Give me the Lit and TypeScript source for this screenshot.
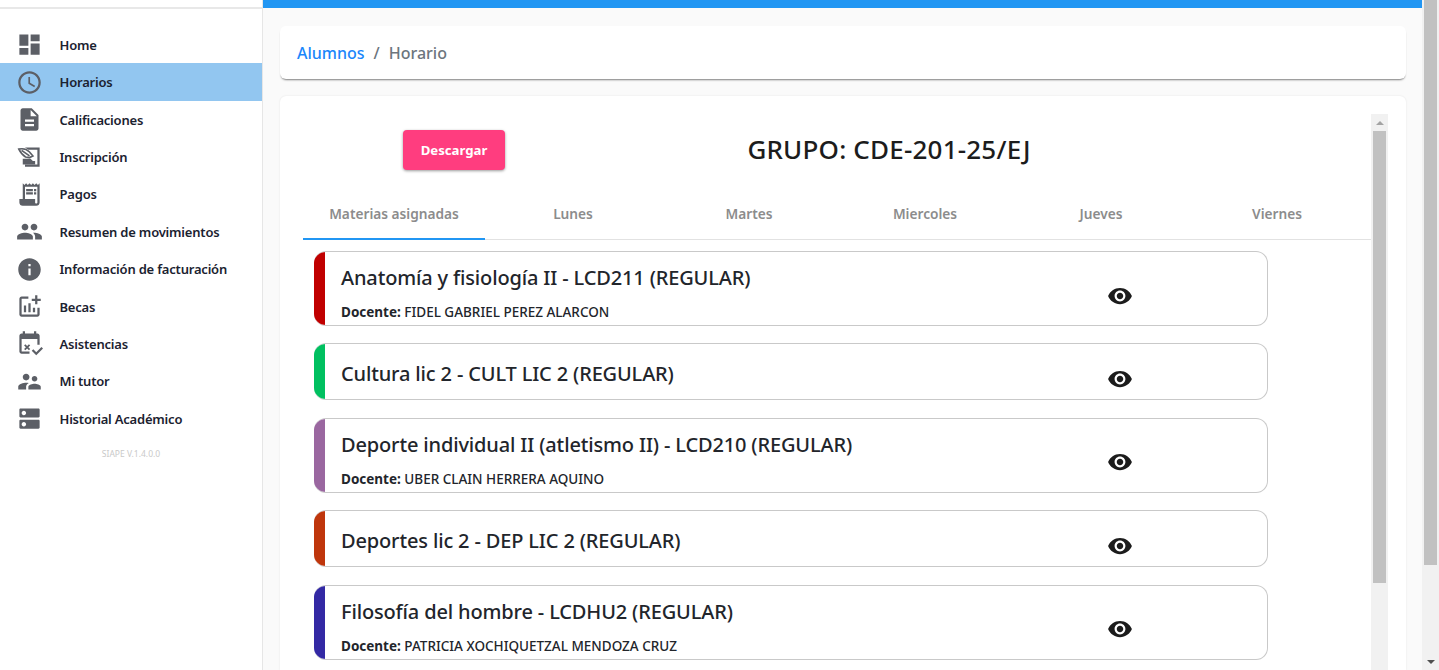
import { LitElement, html, css, svg } from 'lit';
import { customElement } from 'lit/decorators.js';

const ICONS: Record<string, unknown> = {
  dashboard: svg`<path d="M3 13h8V3H3v10zm0 8h8v-6H3v6zm10 0h8V11h-8v10zm0-18v6h8V3h-8z"/>`,
  schedule: svg`<path d="M11.99 2C6.47 2 2 6.48 2 12s4.47 10 9.99 10C17.52 22 22 17.52 22 12S17.52 2 11.99 2zM12 20c-4.42 0-8-3.58-8-8s3.58-8 8-8 8 3.58 8 8-3.58 8-8 8zm.5-13H11v6l5.25 3.15.75-1.23-4.5-2.67z"/>`,
  description: svg`<path d="M14 2H6c-1.1 0-1.99.9-1.99 2L4 20c0 1.1.89 2 1.99 2H18c1.1 0 2-.9 2-2V8l-6-6zm2 16H8v-2h8v2zm0-4H8v-2h8v2zm-3-5V3.5L18.5 9H13z"/>`,
  sign: svg`<path d="M8 4h13v17H8v-2h11V6h-8z"/><path d="M6 14h7l2 2h2v3H6z"/><path d="M2.5 5.5c4-1 7 0 9.5 2.5l3 3.5-3 1.5-3.5-.5C6 11 4 8.5 2.5 5.5zM5 6.5l7 5" fill="none" stroke="#5c5f66" stroke-width="1.5"/>`,
  receipt: svg`<path d="M19.5 3.5L18 2l-1.5 1.5L15 2l-1.5 1.5L12 2l-1.5 1.5L9 2 7.5 3.5 6 2v14H3v3c0 1.66 1.34 3 3 3h12c1.66 0 3-1.34 3-3V2l-1.5 1.5zM19 19c0 .55-.45 1-1 1s-1-.45-1-1v-3H8V5h11v14z"/><path d="M9 7h6v2H9zm7 0h2v2h-2zM9 10h6v2H9zm7 0h2v2h-2z"/>`,
  people: svg`<path d="M16 11c1.66 0 2.99-1.34 2.99-3S17.66 5 16 5c-1.66 0-3 1.34-3 3s1.34 3 3 3zm-8 0c1.66 0 2.99-1.34 2.99-3S9.66 5 8 5C6.34 5 5 6.34 5 8s1.34 3 3 3zm0 2c-2.33 0-7 1.17-7 3.5V19h14v-2.5c0-2.33-4.67-3.5-7-3.5zm8 0c-.29 0-.62.02-.97.05 1.16.84 1.97 1.97 1.97 3.45V19h6v-2.5c0-2.33-4.67-3.5-7-3.5z"/>`,
  info: svg`<path d="M12 2C6.48 2 2 6.48 2 12s4.48 10 10 10 10-4.48 10-10S17.52 2 12 2zm1 15h-2v-6h2v6zm0-8h-2V7h2v2z"/>`,
  addchart: svg`<path d="M22 5v2h-3v3h-2V7h-3V5h3V2h2v3h3zm-3 14H5V5h6V3H5c-1.1 0-2 .9-2 2v14c0 1.1.9 2 2 2h14c1.1 0 2-.9 2-2v-6h-2v6zm-4-6v4h2v-4h-2zm-4 4h2V9h-2v8zm-2 0v-6H7v6h2z"/>`,
  event: svg`<path d="M19 3h-1V1h-2v2H8V1H6v2H5c-1.1 0-2 .9-2 2v14c0 1.1.9 2 2 2h7v-2H5V8h14v5h2V5c0-1.1-.9-2-2-2z"/><path d="M7.2 16.9l1.6-1.6-1.6-1.6 1.1-1.1 1.6 1.6 1.6-1.6 1.1 1.1-1.6 1.6 1.6 1.6-1.1 1.1-1.6-1.6-1.6 1.6zM18 22.5l-4-4 1.4-1.4 2.6 2.6 4.6-4.6 1.4 1.4z"/>`,
  tutor: svg`<path d="M16.5 12c1.38 0 2.49-1.12 2.49-2.5S17.88 7 16.5 7C15.12 7 14 8.12 14 9.5s1.12 2.5 2.5 2.5zM9 11c1.66 0 2.99-1.34 2.99-3S10.66 5 9 5C7.34 5 6 6.34 6 8s1.34 3 3 3zm7.5 3c-1.83 0-5.5.92-5.5 2.75V19h11v-2.25c0-1.83-3.67-2.75-5.5-2.75zM9 13c-2.33 0-7 1.17-7 3.5V19h7v-2.25c0-.85.33-2.34 2.37-3.47C10.5 13.1 9.66 13 9 13z"/>`,
  dns: svg`<path d="M20 13H4c-.55 0-1 .45-1 1v6c0 .55.45 1 1 1h16c.55 0 1-.45 1-1v-6c0-.55-.45-1-1-1zM7 19c-1.1 0-2-.9-2-2s.9-2 2-2 2 .9 2 2-.9 2-2 2zM20 3H4c-.55 0-1 .45-1 1v6c0 .55.45 1 1 1h16c.55 0 1-.45 1-1V4c0-.55-.45-1-1-1zM7 9c-1.1 0-2-.9-2-2s.9-2 2-2 2 .9 2 2-.9 2-2 2z"/>`,
  eye: svg`<path d="M12 4.5C7 4.5 2.73 7.61 1 12c1.73 4.39 6 7.5 11 7.5s9.27-3.11 11-7.5c-1.73-4.39-6-7.5-11-7.5zM12 17c-2.76 0-5-2.24-5-5s2.24-5 5-5 5 2.24 5 5-2.24 5-5 5zm0-8c-1.66 0-3 1.34-3 3s1.34 3 3 3 3-1.34 3-3-1.34-3-3-3z"/>`,
};

const NAV = [
  ['dashboard', 'Home'],
  ['schedule', 'Horarios'],
  ['description', 'Calificaciones'],
  ['sign', 'Inscripción'],
  ['receipt', 'Pagos'],
  ['people', 'Resumen de movimientos'],
  ['info', 'Información de facturación'],
  ['addchart', 'Becas'],
  ['event', 'Asistencias'],
  ['tutor', 'Mi tutor'],
  ['dns', 'Historial Académico'],
];

const TABS = ['Materias asignadas', 'Lunes', 'Martes', 'Miercoles', 'Jueves', 'Viernes'];

const SUBJECTS = [
  { color: '#c00000', title: 'Anatomía y fisiología II - LCD211 (REGULAR)', teacher: 'FIDEL GABRIEL PEREZ ALARCON' },
  { color: '#00c060', title: 'Cultura lic 2 - CULT LIC 2 (REGULAR)', teacher: '' },
  { color: '#9a67a0', title: 'Deporte individual II (atletismo II) - LCD210 (REGULAR)', teacher: 'UBER CLAIN HERRERA AQUINO' },
  { color: '#bf360c', title: 'Deportes lic 2 - DEP LIC 2 (REGULAR)', teacher: '' },
  { color: '#3329a4', title: 'Filosofía del hombre - LCDHU2 (REGULAR)', teacher: 'PATRICIA XOCHIQUETZAL MENDOZA CRUZ' },
];

const icon = (name: string) => html`<svg viewBox="0 0 24 24" aria-hidden="true">${ICONS[name]}</svg>`;

@customElement('app-root')
export class AppRoot extends LitElement {
  static styles = css`
    :host {
      display: flex;
      height: 670px;
      overflow: hidden;
      font-family: 'Noto Sans', 'Open Sans', sans-serif;
      color: #20232a;
      background: #fafafa;
    }
    .sidebar {
      width: 262px;
      flex: none;
      background: #fff;
      border-right: 1px solid #e6e6e6;
    }
    .brand {
      height: 7px;
      border-bottom: 2px solid #e8e8e8;
      margin-bottom: 17.09px;
    }
    .nav-item {
      display: flex;
      align-items: center;
      height: 37.4px;
      padding-left: 16px;
      font-size: 13px;
      letter-spacing: -0.2px;
      font-weight: 600;
      color: #1b2230;
    }
    .nav-item.active {
      background: #92c6f0;
    }
    .nav-item svg {
      width: 27px;
      height: 27px;
      flex: none;
      margin-right: 16.5px;
      fill: #5c5f66;
    }
    .version {
      margin-top: 11px;
      text-align: center;
      font-size: 8.5px;
      color: #c9c9c9;
    }
    .main {
      flex: 1;
      min-width: 0;
      display: flex;
      flex-direction: column;
    }
    .topbar {
      height: 8px;
      flex: none;
      background: #2196f3;
    }
    .content {
      flex: 1;
      min-height: 0;
      display: flex;
      flex-direction: column;
      gap: 17px;
      padding: 18px 16px 0 17px;
    }
    .crumbs {
      height: 53px;
      flex: none;
      display: flex;
      align-items: center;
      padding-left: 17px;
      background: #fff;
      border-radius: 6px;
      box-shadow: 0 2px 2px -1px rgba(0, 0, 0, 0.5);
      font-size: 16px;
      font-weight: 500;
      color: #6c757d;
    }
    .crumbs a {
      color: #1a86fb;
      text-decoration: none;
    }
    .crumbs span {
      margin: 0 9px;
    }
    .panel {
      flex: 1;
      min-height: 0;
      display: flex;
      padding: 18px 18px 0 23px;
      background: #fff;
      border-radius: 6px 6px 0 0;
      box-shadow: 0 0 2px rgba(0, 0, 0, 0.1);
    }
    .panel-body {
      flex: 1;
      min-width: 0;
      overflow: hidden;
    }
    .head {
      display: grid;
      grid-template-columns: 302px 568px;
      align-items: center;
      padding-top: 16px;
      height: 40px;
      margin-bottom: 20px;
    }
    .download {
      justify-self: center;
      width: 102px;
      height: 40px;
      border: none;
      border-radius: 4px;
      background: #ff3d7f;
      color: #fff;
      font: 700 13.2px 'Noto Sans', sans-serif;
      box-shadow: 0 1px 3px rgba(0, 0, 0, 0.4);
    }
    h1 {
      margin: -2px 0 0;
      text-align: center;
      font-size: 26px;
      letter-spacing: 0.2px;
      font-weight: 500;
      color: #1c1c1c;
    }
    .tabs {
      display: grid;
      grid-template-columns: 182px repeat(5, 176px);
      height: 49px;
      border-bottom: 1px solid #e2e2e2;
    }
    .tab {
      display: flex;
      align-items: center;
      justify-content: center;
      padding-bottom: 1px;
      font-size: 13.7px;
      font-weight: 600;
      color: #8c8c8c;
      border-bottom: 2px solid transparent;
      margin-bottom: -1px;
    }
    .tab.active {
      border-bottom-color: #2196f3;
    }
    .subjects {
      display: flex;
      flex-direction: column;
      gap: 17.5px;
      width: 954px;
      margin: 11.1px 0 0 11px;
    }
    .subject {
      display: flex;
      border: 1px solid #c9c9c9;
      border-left: none;
      border-radius: 12px;
      overflow: hidden;
    }
    .accent {
      width: 11px;
      flex: none;
      margin: -1px 0;
    }
    .info {
      flex: 1;
      min-width: 0;
      padding: 11px 0 2.9px 16px;
    }
    .subject.solo .info {
      padding: 15px 0 10px 16px;
    }
    .title {
      font-size: 20px;
      letter-spacing: -0.15px;
      line-height: 30px;
      font-weight: 500;
      color: #22252b;
    }
    .teacher {
      margin-top: 9px;
      font-size: 13.5px;
      line-height: 20px;
      font-weight: 500;
      color: #22252b;
    }
    .teacher b {
      font-weight: 700;
    }
    .see {
      width: 294px;
      flex: none;
      display: flex;
      align-items: center;
      justify-content: center;
      padding-top: 14px;
    }
    .see svg {
      width: 26px;
      height: 26px;
      fill: #1c1c1c;
    }
    .scrollbar {
      width: 17px;
      flex: none;
      display: flex;
      flex-direction: column;
      align-items: center;
      background: #f1f1f1;
    }
    .arrow {
      height: 17px;
      flex: none;
      display: flex;
      align-items: center;
      justify-content: center;
    }
    .arrow i {
      border-left: 4px solid transparent;
      border-right: 4px solid transparent;
    }
    .arrow.up i {
      border-bottom: 4px solid #a3a3a3;
    }
    .arrow.down i {
      border-top: 4px solid #505050;
    }
    .thumb {
      width: 13px;
      flex: none;
      background: #c1c1c1;
    }
    .panel .thumb {
      height: 452px;
    }
    .page-bar .thumb {
      height: 565px;
    }
    .spacer {
      flex: 1;
    }
  `;

  render() {
    return html`
      <aside class="sidebar">
        <div class="brand"></div>
        <nav>
          ${NAV.map(([ic, label]) => html`
            <div class="nav-item ${label === 'Horarios' ? 'active' : ''}">${icon(ic)}${label}</div>
          `)}
        </nav>
        <div class="version">SIAPE V.1.4.0.0</div>
      </aside>
      <div class="main">
        <div class="topbar"></div>
        <div class="content">
          <div class="crumbs"><a href="#">Alumnos</a><span>/</span>Horario</div>
          <section class="panel">
            <div class="panel-body">
              <div class="head">
                <button class="download">Descargar</button>
                <h1>GRUPO: CDE-201-25/EJ</h1>
              </div>
              <div class="tabs">
                ${TABS.map((t, i) => html`<div class="tab ${i === 0 ? 'active' : ''}">${t}</div>`)}
              </div>
              <div class="subjects">
                ${SUBJECTS.map((s) => html`
                  <article class="subject ${s.teacher ? '' : 'solo'}">
                    <div class="accent" style="background:${s.color}"></div>
                    <div class="info">
                      <div class="title">${s.title}</div>
                      ${s.teacher ? html`<div class="teacher"><b>Docente:</b> ${s.teacher}</div>` : ''}
                    </div>
                    <div class="see">${icon('eye')}</div>
                  </article>
                `)}
              </div>
            </div>
            <div class="scrollbar">
              <div class="arrow up"><i></i></div>
              <div class="thumb"></div>
            </div>
          </section>
        </div>
      </div>
      <div class="scrollbar page-bar">
        <div class="thumb"></div>
        <div class="spacer"></div>
        <div class="arrow down"><i></i></div>
      </div>
    `;
  }
}
